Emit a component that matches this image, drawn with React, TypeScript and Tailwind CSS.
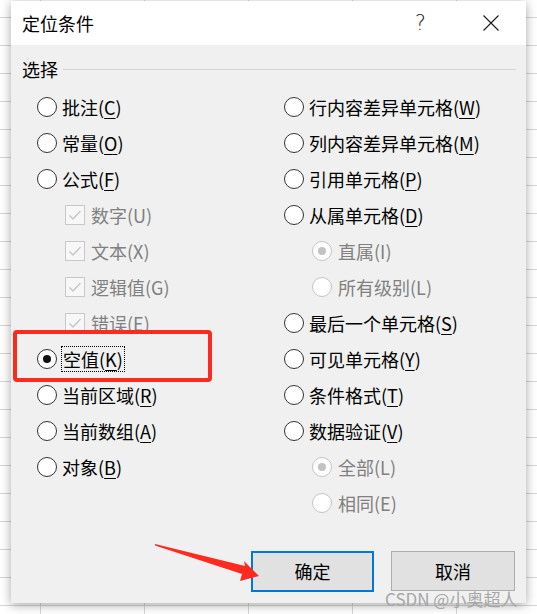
import type { ReactNode } from "react";

type Opt = {
  label: string;
  accel: string;
  kind: "radio" | "check" | "subradio";
  checked?: boolean;
  disabled?: boolean;
  focus?: boolean;
};

const leftOpts: Opt[] = [
  { label: "批注", accel: "C", kind: "radio" },
  { label: "常量", accel: "O", kind: "radio" },
  { label: "公式", accel: "F", kind: "radio" },
  { label: "数字", accel: "U", kind: "check", checked: true, disabled: true },
  { label: "文本", accel: "X", kind: "check", checked: true, disabled: true },
  { label: "逻辑值", accel: "G", kind: "check", checked: true, disabled: true },
  { label: "错误", accel: "E", kind: "check", checked: true, disabled: true },
  { label: "空值", accel: "K", kind: "radio", checked: true, focus: true },
  { label: "当前区域", accel: "R", kind: "radio" },
  { label: "当前数组", accel: "A", kind: "radio" },
  { label: "对象", accel: "B", kind: "radio" },
];

const rightOpts: Opt[] = [
  { label: "行内容差异单元格", accel: "W", kind: "radio" },
  { label: "列内容差异单元格", accel: "M", kind: "radio" },
  { label: "引用单元格", accel: "P", kind: "radio" },
  { label: "从属单元格", accel: "D", kind: "radio" },
  { label: "直属", accel: "I", kind: "subradio", checked: true, disabled: true },
  { label: "所有级别", accel: "L", kind: "subradio", disabled: true },
  { label: "最后一个单元格", accel: "S", kind: "radio" },
  { label: "可见单元格", accel: "Y", kind: "radio" },
  { label: "条件格式", accel: "T", kind: "radio" },
  { label: "数据验证", accel: "V", kind: "radio" },
  { label: "全部", accel: "L", kind: "subradio", checked: true, disabled: true },
  { label: "相同", accel: "E", kind: "subradio", disabled: true },
];

function Radio({ checked, disabled }: { checked?: boolean; disabled?: boolean }) {
  return (
    <span
      className={
        disabled
          ? "flex h-[20px] w-[20px] shrink-0 items-center justify-center rounded-full border border-[#c4c4c4] bg-white"
          : "flex h-[20px] w-[20px] shrink-0 items-center justify-center rounded-full border-[1.5px] border-[#333333] bg-white"
      }
    >
      {checked ? (
        <span
          className={
            disabled
              ? "h-[8px] w-[8px] rounded-full bg-[#c2c2c2]"
              : "h-[8px] w-[8px] rounded-full bg-[#111111]"
          }
        />
      ) : null}
    </span>
  );
}

function Check({ checked }: { checked?: boolean }) {
  return (
    <span className="flex h-[20px] w-[20px] shrink-0 items-center justify-center border border-[#c8c8c8] bg-[#f7f7f7]">
      {checked ? (
        <svg width="14" height="12" viewBox="0 0 14 12" fill="none">
          <path d="M1.5 6.5 L5 10 L12.5 2" stroke="#c4c4c4" strokeWidth="1.4" />
        </svg>
      ) : null}
    </span>
  );
}

function Option({ opt }: { opt: Opt }) {
  const text: ReactNode = (
    <>
      {opt.label}(
      {opt.disabled ? (
        opt.accel
      ) : (
        <span className="underline decoration-1 underline-offset-[3px]">{opt.accel}</span>
      )}
      )
    </>
  );
  const sub = opt.kind !== "radio";
  return (
    <div className={sub ? "flex h-[36px] items-center gap-[6px] pl-[28px]" : "flex h-[36px] items-center gap-[5px]"}>
      {opt.kind === "check" ? (
        <Check checked={opt.checked} />
      ) : (
        <Radio checked={opt.checked} disabled={opt.disabled} />
      )}
      <span
        className={
          opt.focus
            ? "px-[1px] leading-[24px] text-black outline-1 outline-dotted outline-black"
            : opt.disabled
              ? "leading-[24px] text-[#808080]"
              : "leading-[24px] text-black"
        }
      >
        {text}
      </span>
    </div>
  );
}

export default function App() {
  return (
    <div className="relative h-[614px] w-[537px] overflow-hidden bg-white bg-[linear-gradient(#d6d6d6_1px,transparent_1px),linear-gradient(90deg,#d6d6d6_1px,transparent_1px)] bg-[size:104px_28px] bg-[position:40px_17px] pl-[11px] pt-[1px] font-['Noto_Sans_CJK_SC',sans-serif] text-[18px]">
      <div className="flex h-[602px] w-[515px] flex-col shadow-[0_2px_10px_rgba(0,0,0,0.35)]">
        <div className="flex h-[44px] items-center bg-white pl-[11px] pr-[27px]">
          <span className="leading-none text-black">定位条件</span>
          <span className="ml-auto mr-[57px] font-['DejaVu_Sans',sans-serif] text-[21px] font-extralight leading-none text-[#222]">?</span>
          <svg width="16" height="16" viewBox="0 0 16 16" fill="none">
            <path d="M0.5 0.5 L15.5 15.5 M15.5 0.5 L0.5 15.5" stroke="#1a1a1a" strokeWidth="1.1" />
          </svg>
        </div>

        <div className="flex flex-1 flex-col bg-[#f0f0f0] pb-[11px] pl-[11px] pr-[10px] pt-[12px]">
          <div className="flex h-[24px] items-center gap-[5px]">
            <span className="leading-none text-black">选择</span>
            <span className="h-px flex-1 bg-[#d5d5d5]" />
          </div>

          <div className="mt-[8px] grid grid-cols-[247px_1fr] pl-[15px]">
            <div className="flex flex-col">
              {leftOpts.map((o) => (
                <Option key={o.label} opt={o} />
              ))}
            </div>
            <div className="flex flex-col">
              {rightOpts.map((o) => (
                <Option key={o.label} opt={o} />
              ))}
            </div>
          </div>

          <div className="mt-auto flex justify-end gap-[17px] pr-[1px]">
            <button className="flex h-[41px] w-[123px] items-center justify-center border-2 border-[#0078d7] bg-[#e1e1e1] text-black">
              确定
            </button>
            <button className="flex h-[40px] w-[124px] items-center justify-center border border-[#adadad] bg-[#e1e1e1] text-black">
              取消
            </button>
          </div>
        </div>
      </div>

      {/* annotations drawn over the dialog */}
      <div className="absolute left-[13px] top-[330px] h-[52px] w-[199px] rounded-[4px] border-4 border-[#fd2a1f]" />
      <svg className="absolute left-0 top-0" width="537" height="614" viewBox="0 0 537 614">
        <polygon
          points="155,544 245,566 244,561 259,576 240,581 242,574 155,545.5"
          fill="#fd2a1f"
        />
      </svg>
      <span className="absolute left-[385px] top-[588px] whitespace-nowrap text-[17px] leading-[22px] text-[#a6a6a6]">
        CSDN @小奥超人
      </span>
    </div>
  );
}
